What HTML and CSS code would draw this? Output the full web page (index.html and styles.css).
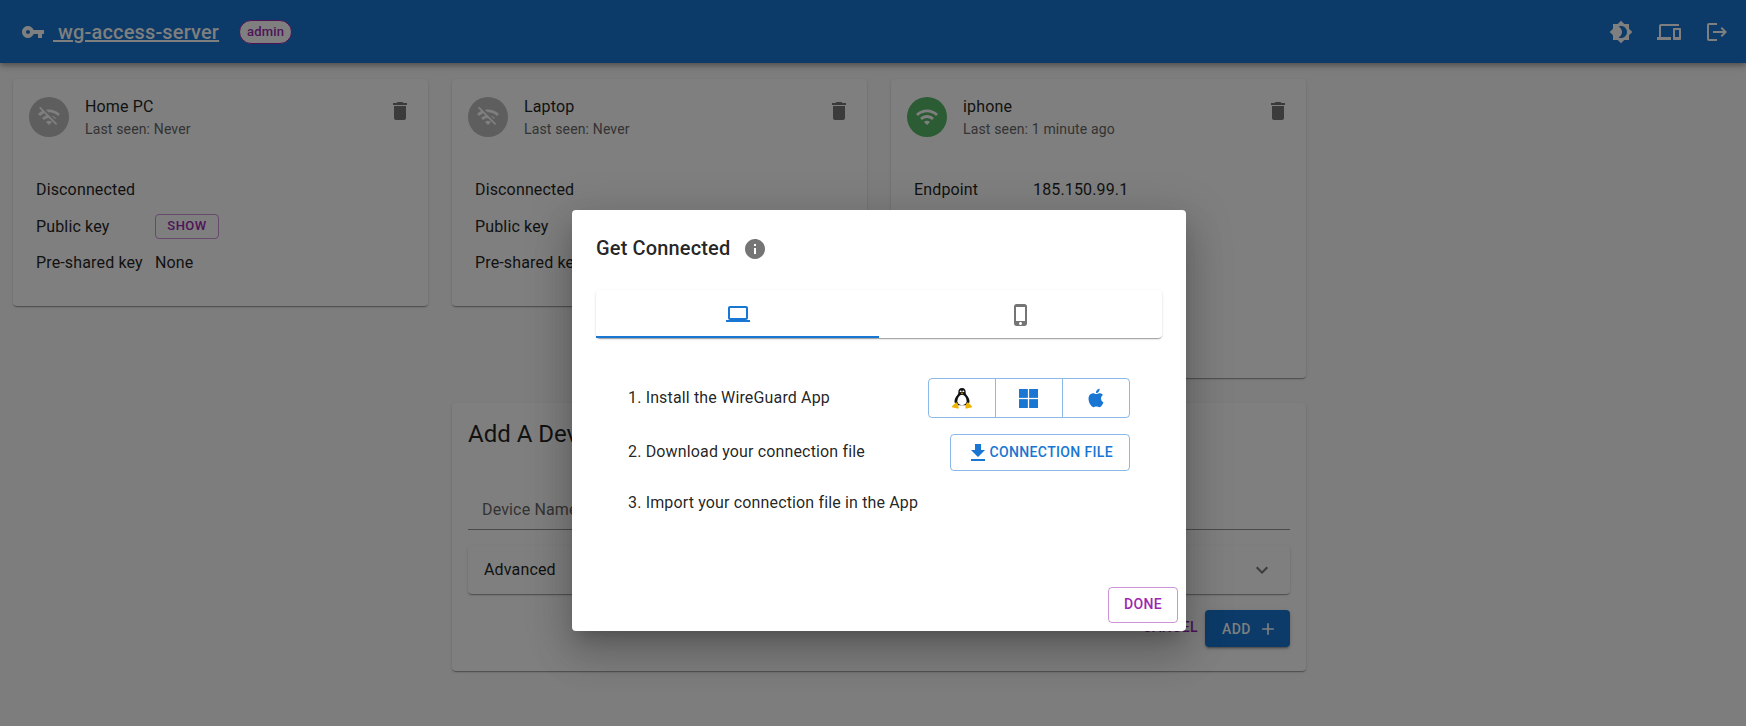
FILE: index.html
```html
<!DOCTYPE html>
<html>

<head>
    <meta charset="utf-8">
    <title>wg-access-server</title>
    <link rel="stylesheet" href="styles.css">
</head>

<body>
    <header class="topbar">
        <svg class="key-icon" viewBox="0 0 24 24"><path d="M12.65 10C11.83 7.67 9.61 6 7 6c-3.31 0-6 2.69-6 6s2.69 6 6 6c2.61 0 4.83-1.67 5.65-4H17v4h4v-4h2v-4H12.65zM7 14c-1.1 0-2-.9-2-2s.9-2 2-2 2 .9 2 2-.9 2-2 2z"/></svg>
        <a class="brand" href="#">&nbsp;wg-access-server</a>
        <span class="chip">admin</span>
        <div class="topbar-actions">
            <svg class="bar-icon" viewBox="0 0 24 24"><path d="M20 8.69V4h-4.69L12 .69 8.69 4H4v4.69L.69 12 4 15.31V20h4.69L12 23.31 15.31 20H20v-4.69L23.31 12 20 8.69zM12 18c-.89 0-1.74-.2-2.5-.55C11.56 16.5 13 14.42 13 12s-1.44-4.5-3.5-5.45C10.26 6.2 11.11 6 12 6c3.31 0 6 2.69 6 6s-2.69 6-6 6z"/></svg>
            <svg class="bar-icon" viewBox="0 0 24 24"><path d="M4 6h18V4H4c-1.1 0-2 .9-2 2v11H0v3h14v-3H4V6zm19 2h-6c-.55 0-1 .45-1 1v10c0 .55.45 1 1 1h6c.55 0 1-.45 1-1V9c0-.55-.45-1-1-1zm-1 9h-4v-7h4v7z"/></svg>
            <svg class="bar-icon" viewBox="0 0 24 24"><path d="M17 7l-1.41 1.41L18.17 11H8v2h10.17l-2.58 2.58L17 17l5-5zM4 5h8V3H4c-1.1 0-2 .9-2 2v14c0 1.1.9 2 2 2h8v-2H4V5z"/></svg>
        </div>
    </header>

    <main class="device-grid">
        <section class="card">
            <div class="card-head">
                <div class="avatar">
                    <svg viewBox="0 0 24 24"><path d="M22.99 9C19.15 5.16 13.8 3.76 8.84 4.78l2.52 2.52c3.47-.17 6.99 1.05 9.63 3.7l2-2zm-4 4c-1.29-1.29-2.84-2.13-4.49-2.56l3.53 3.53.96-.97zM2 3.05 5.07 6.1C3.6 6.82 2.22 7.78 1 9l1.99 2c1.24-1.24 2.67-2.16 4.2-2.77l2.24 2.24C7.81 10.89 6.27 11.73 5 13v.01L6.99 15c1.36-1.36 3.14-2.04 4.92-2.06L18.98 20l1.27-1.26L3.29 1.79 2 3.05zM9 17l3 3 3-3c-1.65-1.66-4.34-1.66-6 0z"/></svg>
                </div>
                <div class="card-titles">
                    <div class="card-title">Home PC</div>
                    <div class="card-sub">Last seen: Never</div>
                </div>
                <svg class="trash" viewBox="0 0 24 24"><path d="M6 19c0 1.1.9 2 2 2h8c1.1 0 2-.9 2-2V7H6v12zM19 4h-3.5l-1-1h-5l-1 1H5v2h14V4z"/></svg>
            </div>
            <div class="card-rows">
                <div class="row">Disconnected</div>
                <div class="row"><span class="row-label">Public key</span><span class="show-btn">SHOW</span></div>
                <div class="row"><span class="row-label">Pre-shared key</span><span>None</span></div>
            </div>
        </section>

        <section class="card">
            <div class="card-head">
                <div class="avatar">
                    <svg viewBox="0 0 24 24"><path d="M22.99 9C19.15 5.16 13.8 3.76 8.84 4.78l2.52 2.52c3.47-.17 6.99 1.05 9.63 3.7l2-2zm-4 4c-1.29-1.29-2.84-2.13-4.49-2.56l3.53 3.53.96-.97zM2 3.05 5.07 6.1C3.6 6.82 2.22 7.78 1 9l1.99 2c1.24-1.24 2.67-2.16 4.2-2.77l2.24 2.24C7.81 10.89 6.27 11.73 5 13v.01L6.99 15c1.36-1.36 3.14-2.04 4.92-2.06L18.98 20l1.27-1.26L3.29 1.79 2 3.05zM9 17l3 3 3-3c-1.65-1.66-4.34-1.66-6 0z"/></svg>
                </div>
                <div class="card-titles">
                    <div class="card-title">Laptop</div>
                    <div class="card-sub">Last seen: Never</div>
                </div>
                <svg class="trash" viewBox="0 0 24 24"><path d="M6 19c0 1.1.9 2 2 2h8c1.1 0 2-.9 2-2V7H6v12zM19 4h-3.5l-1-1h-5l-1 1H5v2h14V4z"/></svg>
            </div>
            <div class="card-rows">
                <div class="row">Disconnected</div>
                <div class="row">Public key</div>
                <div class="row">Pre-shared key</div>
            </div>
        </section>

        <section class="card card-tall">
            <div class="card-head">
                <div class="avatar avatar-online">
                    <svg viewBox="0 0 24 24"><path d="M1 9l2 2c4.97-4.97 13.03-4.97 18 0l2-2C16.93 2.93 7.08 2.93 1 9zm8 8l3 3 3-3c-1.65-1.66-4.34-1.66-6 0zm-4-4 2 2c2.76-2.76 7.24-2.76 10 0l2-2C15.14 9.14 8.87 9.14 5 13z"/></svg>
                </div>
                <div class="card-titles">
                    <div class="card-title">iphone</div>
                    <div class="card-sub">Last seen: 1 minute ago</div>
                </div>
                <svg class="trash" viewBox="0 0 24 24"><path d="M6 19c0 1.1.9 2 2 2h8c1.1 0 2-.9 2-2V7H6v12zM19 4h-3.5l-1-1h-5l-1 1H5v2h14V4z"/></svg>
            </div>
            <div class="card-rows">
                <div class="row"><span class="row-label">Endpoint</span><span>185.150.99.1</span></div>
            </div>
        </section>

        <section class="card add-card">
            <h2 class="add-title">Add A Device</h2>
            <div class="name-field">Device Name</div>
            <div class="advanced">
                <span>Advanced</span>
                <svg class="chevron" viewBox="0 0 24 24"><path d="M16.59 8.59 12 13.17 7.41 8.59 6 10l6 6 6-6z"/></svg>
            </div>
            <div class="add-actions">
                <span class="cancel-btn">CANCEL</span>
                <span class="add-btn">ADD
                    <svg viewBox="0 0 24 24"><path d="M19 13h-6v6h-2v-6H5v-2h6V5h2v6h6v2z"/></svg>
                </span>
            </div>
        </section>
    </main>

    <div class="dialog">
        <div class="dialog-title">
            <span>Get Connected</span>
            <svg class="info-icon" viewBox="2 2 20 20"><path d="M12 2C6.48 2 2 6.48 2 12s4.48 10 10 10 10-4.48 10-10S17.52 2 12 2zm1 15h-2v-6h2v6zm0-8h-2V7h2v2z"/></svg>
        </div>

        <div class="tabs">
            <div class="tab tab-active">
                <svg viewBox="0 0 24 24"><path d="M20 18c1.1 0 1.99-.9 1.99-2L22 6c0-1.1-.9-2-2-2H4c-1.1 0-2 .9-2 2v10c0 1.1.9 2 2 2H0v2h24v-2h-4zM4 6h16v10H4V6z"/></svg>
            </div>
            <div class="tab">
                <svg viewBox="0 0 24 24"><path d="M15.5 1h-8C6.12 1 5 2.12 5 3.5v17C5 21.88 6.12 23 7.5 23h8c1.38 0 2.5-1.12 2.5-2.5v-17C18 2.12 16.88 1 15.5 1zm-4 21c-.83 0-1.5-.67-1.5-1.5s.67-1.5 1.5-1.5 1.5.67 1.5 1.5-.67 1.5-1.5 1.5zm4.5-4H7V4h9v14z"/></svg>
            </div>
        </div>

        <div class="steps">
            <div class="step">
                <span>1. Install the WireGuard App</span>
                <div class="os-group">
                    <div class="os-btn">
                        <svg class="penguin" viewBox="0 0 20 22" preserveAspectRatio="none">
                            <path fill="#111" d="M10 0C7.6 0 6.6 1.8 6.7 4.2c.1 1.8-.6 2.8-1.6 4.3C4 10.2 3 12.4 3.2 14.8L5 18h10l1.8-3.2c.2-2.4-.8-4.6-1.9-6.3-1-1.5-1.7-2.5-1.6-4.3C13.4 1.8 12.4 0 10 0z"/>
                            <path fill="#fff" d="M10 7c-2.2 0-4.2 3.6-4.2 6.9 0 2.4 1.8 4.1 4.2 4.1s4.2-1.7 4.2-4.1C14.2 10.6 12.2 7 10 7z"/>
                            <circle fill="#fff" cx="8.8" cy="3.4" r=".9"/>
                            <circle fill="#fff" cx="11.2" cy="3.4" r=".9"/>
                            <path fill="#f0b400" d="M8.5 4.9h3L10 6.4zM4.6 15L1 19c-.5.6 0 1.1.7 1.3l4 1.3c.9.2 1.5-.3 1.3-1.2l-.9-4.2zM15.4 15l3.6 4c.5.6 0 1.1-.7 1.3l-4 1.3c-.9.2-1.5-.3-1.3-1.2l.9-4.2z"/>
                        </svg>
                    </div>
                    <div class="os-btn">
                        <svg class="win-icon" viewBox="0 0 18 18">
                            <rect width="8.4" height="8.4"/>
                            <rect x="9.6" width="8.4" height="8.4"/>
                            <rect y="9.6" width="8.4" height="8.4"/>
                            <rect x="9.6" y="9.6" width="8.4" height="8.4"/>
                        </svg>
                    </div>
                    <div class="os-btn">
                        <svg class="apple-icon" viewBox="0 0 24 24"><path d="M18.71 19.5c-.83 1.24-1.71 2.45-3.05 2.47-1.34.03-1.77-.79-3.29-.79-1.53 0-2 .77-3.27.82-1.31.05-2.3-1.32-3.14-2.53C4.25 17 2.94 12.45 4.7 9.39c.87-1.52 2.43-2.48 4.12-2.51 1.28-.02 2.5.87 3.29.87.78 0 2.26-1.07 3.81-.91.65.03 2.47.26 3.64 1.98-.09.06-2.17 1.28-2.15 3.81.03 3.02 2.65 4.03 2.68 4.04-.03.07-.42 1.44-1.38 2.83M13 3.5c.73-.83 1.94-1.46 2.94-1.5.13 1.17-.34 2.35-1.04 3.19-.69.85-1.83 1.51-2.95 1.42-.15-1.15.41-2.35 1.05-3.11z"/></svg>
                    </div>
                </div>
            </div>
            <div class="step">
                <span class="step-text-up">2. Download your connection file</span>
                <div class="file-btn">
                    <svg viewBox="0 0 24 24"><path d="M19 9h-4V3H9v6H5l7 7 7-7zM5 18v2h14v-2H5z"/></svg>
                    <span class="file-btn-text">CONNECTION FILE</span>
                </div>
            </div>
            <div class="step step-last">
                <span>3. Import your connection file in the App</span>
            </div>
        </div>

        <div class="dialog-actions">
            <span class="done-btn">DONE</span>
        </div>
    </div>
</body>

</html>
```
FILE: styles.css
```css
/* page is painted in its dimmed colours (50% backdrop), the dialog sits on top */
html,
body {
    margin: 0;
    height: 100%;
    overflow: hidden;
}

body {
    background-color: #7d7d7d;
    color: #111;
    font-family: Roboto, "Liberation Sans", sans-serif;
    font-size: 16px;
    line-height: 24px;
    letter-spacing: 0.15px;
}

/* top bar */
.topbar {
    height: 63px;
    padding: 0 17px 0 21px;
    box-sizing: border-box;
    display: flex;
    align-items: center;
    background-color: #0d3b69;
    box-shadow: 0 2px 4px -1px rgba(0, 0, 0, 0.2), 0 4px 5px rgba(0, 0, 0, 0.14), 0 1px 10px rgba(0, 0, 0, 0.12);
    position: relative;
}

.key-icon {
    width: 24px;
    height: 24px;
    fill: #7f7f7f;
}

.brand {
    margin-left: 8px;
    color: #7f7f7f;
    font-size: 20px;
    font-weight: 500;
    letter-spacing: 0.15px;
}

.chip {
    margin-left: 20px;
    height: 22px;
    padding: 0 7px;
    display: flex;
    align-items: center;
    border: 1px solid #4e1358;
    border-radius: 12px;
    background-color: #7f7f7f;
    color: #4e1358;
    font-size: 13px;
    font-weight: 500;
}

.topbar-actions {
    margin-left: auto;
    display: flex;
    gap: 24px;
}

.bar-icon {
    width: 24px;
    height: 24px;
    fill: #7f7f7f;
}

/* device cards */
.device-grid {
    padding: 16px 13px;
    display: grid;
    grid-template-columns: repeat(4, 415px);
    gap: 24px;
    align-items: start;
}

.card {
    height: 227px;
    box-sizing: border-box;
    background-color: #7f7f7f;
    border-radius: 4px;
    box-shadow: 0 2px 1px -1px rgba(0, 0, 0, 0.2), 0 1px 1px rgba(0, 0, 0, 0.14), 0 1px 3px rgba(0, 0, 0, 0.12);
}

.card-tall {
    height: 299px;
}

.card-head {
    padding: 16px;
    display: flex;
    align-items: center;
}

.avatar {
    width: 40px;
    height: 40px;
    margin-right: 16px;
    border-radius: 50%;
    background-color: #5e5e5e;
    display: flex;
    align-items: center;
    justify-content: center;
}

.avatar svg {
    width: 24px;
    height: 24px;
    fill: #7f7f7f;
}

.avatar-online {
    background-color: #2c5c33;
}

.card-titles {
    flex: 1;
}

.card-sub {
    color: #333;
    font-size: 14px;
    line-height: 20px;
}

.trash {
    width: 24px;
    height: 24px;
    fill: #3b3b3b;
    align-self: flex-start;
    margin-top: 4px;
}

.card-rows {
    padding: 17px 23px 0;
}

.row {
    height: 36.5px;
    display: flex;
    align-items: center;
}

.row-label {
    width: 119px;
    flex-shrink: 0;
}

.show-btn {
    width: 64px;
    height: 25px;
    margin-top: -1px;
    box-sizing: border-box;
    display: flex;
    align-items: center;
    justify-content: center;
    border: 1px solid #67496c;
    border-radius: 4px;
    color: #4e1358;
    font-size: 13px;
    font-weight: 500;
    letter-spacing: 0.46px;
}

/* add device form */
.add-card {
    grid-column: 2 / 4;
    height: 268px;
    margin-top: 1px;
    padding: 15px 16px 16px;
    display: flex;
    flex-direction: column;
}

.add-title {
    margin: 0;
    font-size: 24px;
    line-height: 32px;
    font-weight: 400;
    letter-spacing: 0;
}

.name-field {
    margin-top: 26px;
    padding: 24px 14px 8px;
    height: 54px;
    box-sizing: border-box;
    line-height: 20px;
    color: #333;
    border-bottom: 1px solid #4a4a4a;
}

.advanced {
    margin-top: 16px;
    height: 48px;
    padding: 0 16px;
    display: flex;
    align-items: center;
    justify-content: space-between;
    border-radius: 4px;
    box-shadow: 0 2px 1px -1px rgba(0, 0, 0, 0.2), 0 1px 1px rgba(0, 0, 0, 0.14), 0 1px 3px rgba(0, 0, 0, 0.12);
}

.chevron {
    width: 24px;
    height: 24px;
    fill: #3b3b3b;
}

.add-actions {
    margin-top: 16px;
    display: flex;
    justify-content: flex-end;
    align-items: center;
    gap: 7px;
}

.cancel-btn {
    margin-top: -3px;
    color: #4e1358;
    font-size: 14px;
    font-weight: 500;
    letter-spacing: 0.4px;
}

.add-btn {
    height: 37px;
    width: 85px;
    box-sizing: border-box;
    padding-left: 17px;
    display: flex;
    align-items: center;
    gap: 7px;
    border-radius: 4px;
    background-color: #0d3b69;
    color: #7f7f7f;
    font-size: 14px;
    font-weight: 500;
    letter-spacing: 0.4px;
    box-shadow: 0 3px 1px -2px rgba(0, 0, 0, 0.2), 0 2px 2px rgba(0, 0, 0, 0.14), 0 1px 5px rgba(0, 0, 0, 0.12);
}

.add-btn svg {
    width: 20px;
    height: 20px;
    fill: #7f7f7f;
}

/* dialog */
.dialog {
    position: absolute;
    left: 572px;
    top: 210px;
    width: 614px;
    height: 421px;
    box-sizing: border-box;
    padding: 22px 24px 8px;
    display: flex;
    flex-direction: column;
    background-color: #fff;
    color: rgba(0, 0, 0, 0.87);
    border-radius: 4px;
    box-shadow: 0 11px 15px -7px rgba(0, 0, 0, 0.2), 0 24px 38px 3px rgba(0, 0, 0, 0.14), 0 9px 46px 8px rgba(0, 0, 0, 0.12);
}

.dialog-title {
    height: 32px;
    display: flex;
    align-items: center;
    gap: 15px;
    font-size: 20px;
    font-weight: 500;
    letter-spacing: 0.15px;
}

.info-icon {
    width: 20px;
    height: 20px;
    margin-top: 2px;
    fill: #757575;
}

.tabs {
    margin-top: 26px;
    height: 48px;
    display: flex;
    border-radius: 4px;
    box-shadow: 0 2px 1px -1px rgba(0, 0, 0, 0.2), 0 1px 1px rgba(0, 0, 0, 0.14), 0 1px 3px rgba(0, 0, 0, 0.12);
}

.tab {
    flex: 1;
    display: flex;
    align-items: center;
    justify-content: center;
    box-sizing: border-box;
    padding-top: 2px;
}

.tab svg {
    width: 24px;
    height: 24px;
    fill: #757575;
}

.tab-active {
    border-bottom: 2px solid #1976d2;
}

.tab-active svg {
    fill: #1976d2;
}

.steps {
    margin-top: 40px;
    padding: 0 32px;
    display: flex;
    flex-direction: column;
    gap: 16px;
}

.step {
    display: flex;
    align-items: center;
    justify-content: space-between;
}

.step-text-up {
    padding-bottom: 1px;
}

.step-last {
    margin-top: 4px;
}

.os-group {
    width: 202px;
    height: 40px;
    box-sizing: border-box;
    display: flex;
    border: 1px solid rgba(25, 118, 210, 0.5);
    border-radius: 4px;
}

.os-btn {
    flex: 1;
    display: flex;
    align-items: center;
    justify-content: center;
}

.os-btn + .os-btn {
    border-left: 1px solid rgba(25, 118, 210, 0.5);
}

.penguin {
    width: 22px;
    height: 21px;
}

.win-icon {
    width: 19px;
    height: 19px;
    margin-left: -2px;
    fill: #1976d2;
}

.apple-icon {
    width: 22px;
    height: 22px;
    fill: #1976d2;
}

.file-btn {
    height: 37px;
    box-sizing: border-box;
    padding: 0 16px 0 15px;
    display: flex;
    align-items: center;
    border: 1px solid rgba(25, 118, 210, 0.5);
    border-radius: 4px;
    color: #1976d2;
    font-size: 14px;
    font-weight: 500;
    letter-spacing: 0.35px;
}

.file-btn svg {
    width: 24px;
    height: 24px;
    fill: #1976d2;
}

.file-btn-text {
    padding-bottom: 2px;
}

.dialog-actions {
    margin-top: auto;
    margin-right: -16px;
    display: flex;
    justify-content: flex-end;
}

.done-btn {
    width: 70px;
    height: 36px;
    box-sizing: border-box;
    padding-bottom: 2px;
    display: flex;
    align-items: center;
    justify-content: center;
    border: 1px solid rgba(156, 39, 176, 0.5);
    border-radius: 4px;
    color: #9c27b0;
    font-size: 14px;
    font-weight: 500;
    letter-spacing: 0.4px;
}
```
